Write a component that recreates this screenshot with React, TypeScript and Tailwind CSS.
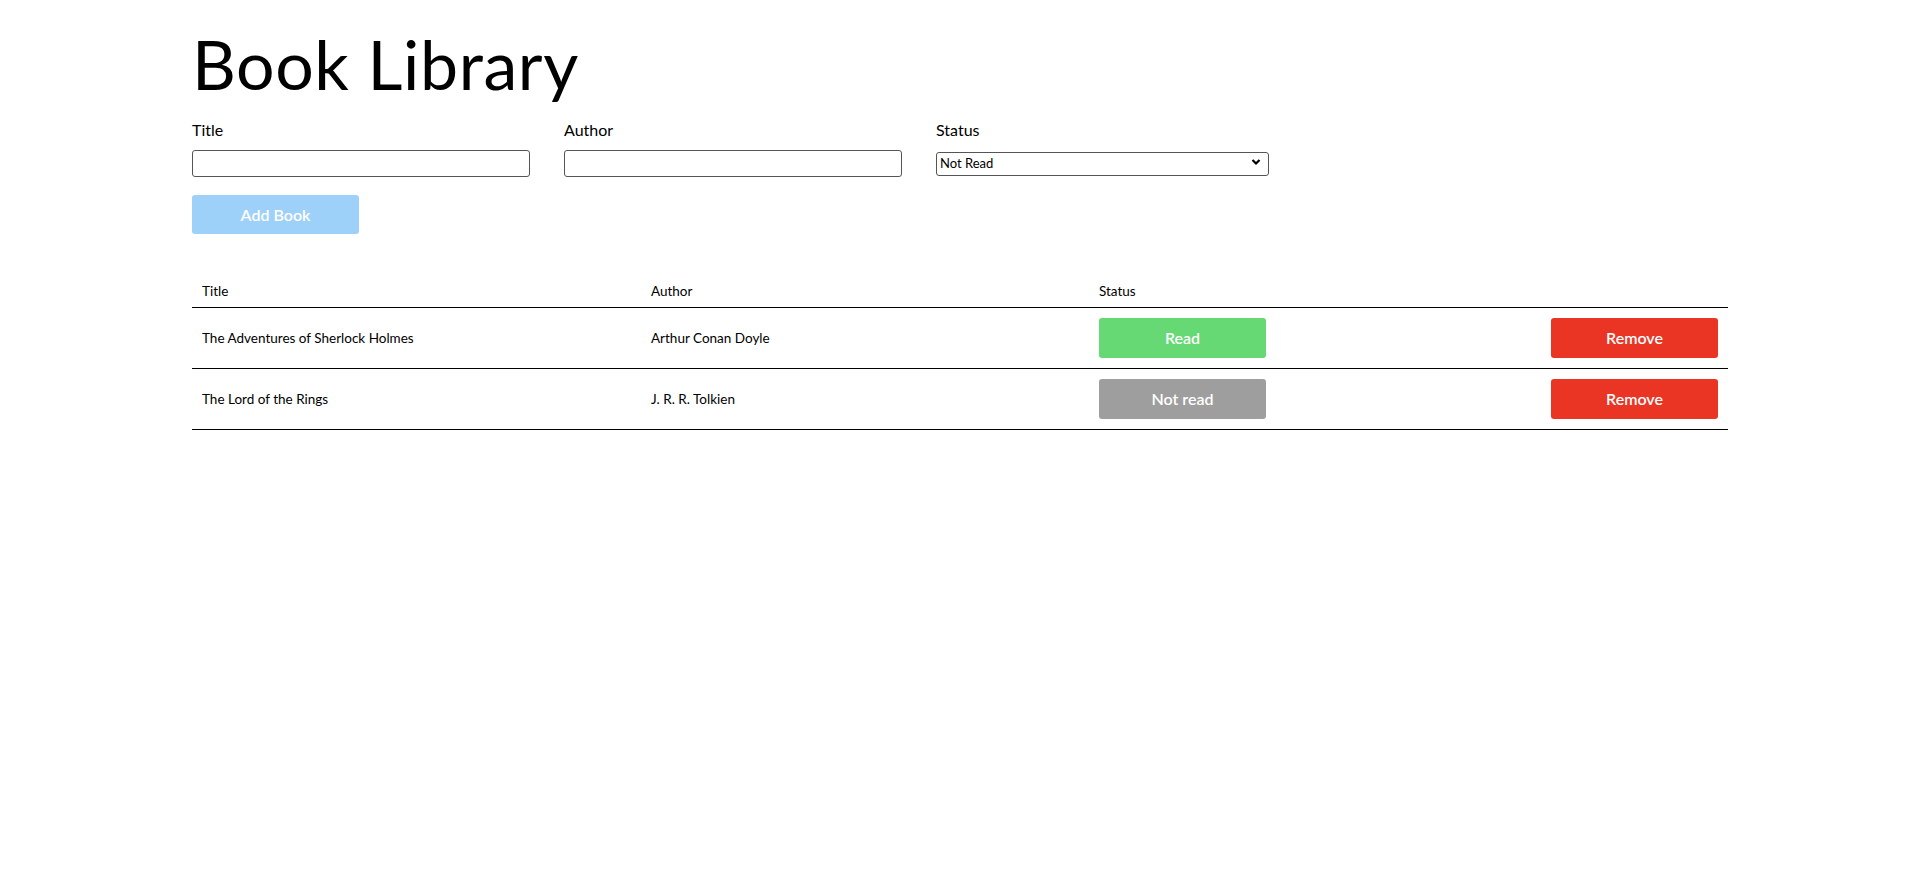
import React, { useState } from "react";

type Book = { title: string; author: string; read: boolean };

const initialBooks: Book[] = [
  { title: "The Adventures of Sherlock Holmes", author: "Arthur Conan Doyle", read: true },
  { title: "The Lord of the Rings", author: "J. R. R. Tolkien", read: false },
];

export default function App() {
  const [books, setBooks] = useState<Book[]>(initialBooks);
  const [title, setTitle] = useState("");
  const [author, setAuthor] = useState("");
  const [status, setStatus] = useState("not-read");

  const addBook = () => {
    if (!title || !author) return;
    setBooks([...books, { title, author, read: status === "read" }]);
    setTitle("");
    setAuthor("");
  };

  return (
    <div className="min-h-screen bg-white font-['Lato',sans-serif] text-black">
      <div className="w-[80%] mx-auto">
        {/* Header */}
        <h1 className="text-[68px] leading-none pt-[30px] pb-[22px] tracking-[0.6px]">Book Library</h1>

        {/* Form */}
        <div className="flex gap-[34px]">
          <label className="flex flex-col w-[338px]">
            <span className="text-[16px] leading-[20px] mb-[10px]">Title</span>
            <input
              value={title}
              onChange={(e) => setTitle(e.target.value)}
              className="h-[27px] border border-[#555] rounded-[3px] px-1 text-[13px]"
            />
          </label>
          <label className="flex flex-col w-[338px]">
            <span className="text-[16px] leading-[20px] mb-[10px]">Author</span>
            <input
              value={author}
              onChange={(e) => setAuthor(e.target.value)}
              className="h-[27px] border border-[#555] rounded-[3px] px-1 text-[13px]"
            />
          </label>
          <label className="flex flex-col w-[333px]">
            <span className="text-[16px] leading-[20px] mb-[10px]">Status</span>
            <div className="relative h-[24px]">
              <select
                value={status}
                onChange={(e) => setStatus(e.target.value)}
                className="appearance-none w-full h-full border border-[#555] rounded-[3px] pl-[3px] text-[13px] bg-white"
              >
                <option value="not-read">Not Read</option>
                <option value="read">Read</option>
              </select>
              <svg
                className="absolute right-[8px] top-[8px] pointer-events-none"
                width="10"
                height="8"
                viewBox="0 0 10 8"
              >
                <path d="M1.5 2 L5 5.5 L8.5 2" fill="none" stroke="#000" strokeWidth="2.2" />
              </svg>
            </div>
          </label>
        </div>

        <button
          onClick={addBook}
          className="mt-[18px] w-[167px] h-[39px] rounded-[3px] bg-[#9ed1fa] text-white text-[16px] font-semibold"
        >
          Add Book
        </button>

        {/* Table */}
        <table className="w-full mt-[37px] border-collapse text-[13.5px] table-fixed">
          <colgroup>
            <col className="w-[449px]" />
            <col className="w-[448px]" />
            <col className="w-[449px]" />
            <col />
          </colgroup>
          <thead>
            <tr className="border-b border-black">
              <th className="text-left font-normal px-[10px] h-[36px] pt-[4px]">Title</th>
              <th className="text-left font-normal px-[10px] pt-[4px]">Author</th>
              <th className="text-left font-normal px-[10px] pt-[4px]">Status</th>
              <th></th>
            </tr>
          </thead>
          <tbody>
            {books.map((b, i) => (
              <tr key={i} className="border-b border-black h-[61px]">
                <td className="px-[10px] pt-[2px]">{b.title}</td>
                <td className="px-[10px] pt-[2px]">{b.author}</td>
                <td className="px-[10px]">
                  <button
                    onClick={() =>
                      setBooks(books.map((x, j) => (j === i ? { ...x, read: !x.read } : x)))
                    }
                    className={`w-[167px] h-[40px] rounded-[3px] text-white text-[16px] font-semibold ${
                      b.read ? "bg-[#66d874]" : "bg-[#9e9e9e]"
                    }`}
                  >
                    {b.read ? "Read" : "Not read"}
                  </button>
                </td>
                <td className="px-[10px] text-right">
                  <button
                    onClick={() => setBooks(books.filter((_, j) => j !== i))}
                    className="w-[167px] h-[40px] rounded-[3px] bg-[#ea3424] text-white text-[16px] font-semibold"
                  >
                    Remove
                  </button>
                </td>
              </tr>
            ))}
          </tbody>
        </table>
      </div>
    </div>
  );
}
